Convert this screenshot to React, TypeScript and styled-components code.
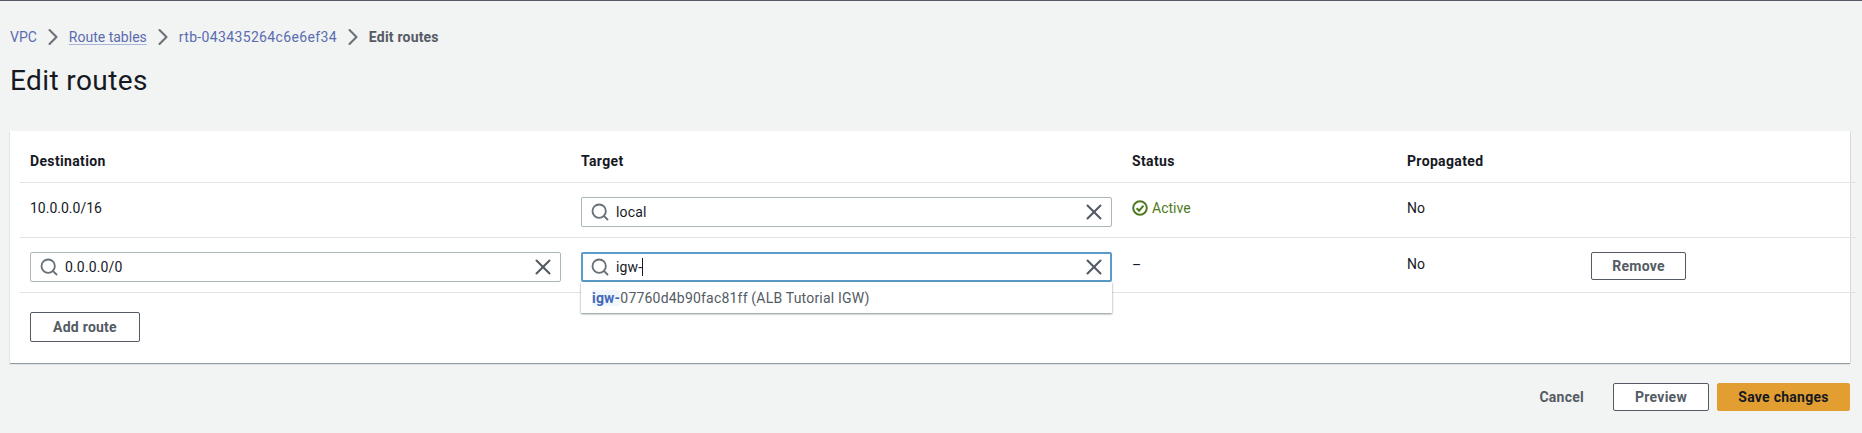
import React from "react";
import styled, {createGlobalStyle} from "styled-components";
import {Search, X, ChevronRight} from "lucide-react";

const GlobalStyle = createGlobalStyle`
  html, body {
    margin: 0;
    padding: 0;
    background: #f2f3f3;
  }

  body {
    font-family: Roboto, "Liberation Sans", sans-serif;
    font-size: 14px;
    color: #16191f;
  }
`

const Page = styled.div`
  width: 1862px;
  height: 433px;
  overflow: hidden;
  box-sizing: border-box;
  border-top: 1px solid #545b64;
  padding: 27px 12px 0 10px;
`

const Breadcrumbs = styled.nav`
  display: flex;
  align-items: center;
  height: 18px;
  color: #545b64;
`

const Crumb = styled.span<{$underline?: boolean; $spacing?: number}>`
  color: #5a6cb0;
  letter-spacing: ${p => p.$spacing ?? 0}px;
  text-decoration: ${p => p.$underline ? "underline" : "none"};
  text-decoration-color: #a9b4dc;
  text-underline-offset: 2px;
`

const CurrentCrumb = styled.span`
  color: #545b64;
  font-weight: 700;
  letter-spacing: 0.2px;
`

const CrumbArrow = styled(ChevronRight)`
  width: 28px;
  height: 28px;
  margin: 0 2px;
  color: #687078;
  stroke-width: 1.8;
`

const Title = styled.h1`
  margin: 17px 0 0;
  font-size: 28px;
  line-height: 36px;
  font-weight: 400;
  letter-spacing: 0.4px;
  color: #16191f;
`

const Card = styled.section`
  margin-top: 32px;
  width: 1840px;
  height: 232px;
  box-sizing: border-box;
  background: #fff;
  padding: 0 0 0 10px;
  box-shadow: 0 1px 1px 0 rgba(0, 28, 36, 0.4), 1px 0 1px -1px rgba(0, 28, 36, 0.3);
  position: relative;
`

const Row = styled.div<{$height: number}>`
  display: grid;
  grid-template-columns: 551px 551px 275px 184px 275px;
  width: 1836px;
  height: ${p => p.$height}px;
  border-bottom: 1px solid #e2e4e4;
  box-sizing: border-box;
`

const HeaderCell = styled.div`
  padding: 20px 10px 0;
  line-height: 20px;
  font-weight: 700;
  letter-spacing: 0.35px;
  color: #16191f;
`

const Cell = styled.div<{$top?: number}>`
  padding: ${p => p.$top ?? 14}px 10px 0;
  line-height: 20px;
  color: #16191f;
`

const Field = styled.div<{$focus?: boolean}>`
  display: flex;
  align-items: center;
  width: 531px;
  height: 30px;
  box-sizing: border-box;
  background: #fff;
  border-radius: 2px;
  border: ${p => p.$focus ? "2px solid #5a9bc9" : "1px solid #aab7b8"};
  padding: 0 ${p => p.$focus ? 3 : 4}px 0 ${p => p.$focus ? 7 : 8}px;
`

const SearchIcon = styled(Search)`
  width: 20px;
  height: 20px;
  color: #687078;
  stroke-width: 2.2;
  flex: none;
`

const ClearIcon = styled(X)`
  width: 26px;
  height: 26px;
  color: #545b64;
  stroke-width: 1.9;
  flex: none;
`

const FieldText = styled.span`
  flex: 1;
  margin-left: 6px;
  line-height: 20px;
  letter-spacing: 0.15px;
  color: #16191f;
`

const Caret = styled.span`
  display: inline-block;
  width: 1px;
  height: 18px;
  vertical-align: -4px;
  background: #16191f;
`

const Anchor = styled.div`
  position: relative;
`

const Dropdown = styled.div`
  position: absolute;
  z-index: 2;
  top: 30px;
  left: 0;
  width: 531px;
  height: 31px;
  box-sizing: border-box;
  background: #fff;
  padding: 6px 11px 0;
  line-height: 20px;
  letter-spacing: 0.2px;
  color: #545b64;
  box-shadow: 0 1px 2px rgba(0, 28, 36, 0.5);
`

const Match = styled.span`
  color: #3f68b8;
  font-weight: 700;
  background: #f1f6fd;
`

const StatusOk = styled.span`
  display: inline-flex;
  align-items: center;
  gap: 4px;
  color: #4f7a21;
`

const Button = styled.button<{$width: number; $height?: number}>`
  display: block;
  width: ${p => p.$width}px;
  height: ${p => p.$height ?? 30}px;
  box-sizing: border-box;
  padding: 0;
  background: #fff;
  border: 1px solid #545b64;
  border-radius: 2px;
  font: 700 14px Roboto, "Liberation Sans", sans-serif;
  letter-spacing: 0.25px;
  color: #545b64;
`

const CardFooter = styled.div`
  padding: 19px 0 0 10px;
`

const Actions = styled.div`
  display: flex;
  justify-content: flex-end;
  align-items: center;
  width: 1840px;
  margin-top: 20px;
`

const CancelLink = styled.span`
  font-weight: 700;
  letter-spacing: 0.25px;
  color: #545b64;
  margin-right: 29px;
`

const PrimaryButton = styled(Button)`
  margin-left: 8px;
  background: #e39e32;
  border-color: #e39e32;
  color: #16191f;
`

function ActiveIcon() {
    return <svg width="16" height="16" viewBox="0 0 16 16" fill="none" stroke="currentColor" strokeWidth="2">
        <circle cx="8" cy="8" r="6.8"/>
        <path d="M4.6 8.2 7.1 10.7 11.5 5.6"/>
    </svg>
}

function SearchField({value, focus, caret}: { value: string, focus?: boolean, caret?: boolean }) {
    return <Field $focus={focus}>
        <SearchIcon/>
        <FieldText>{value}{caret && <Caret/>}</FieldText>
        <ClearIcon/>
    </Field>
}

export default function App() {
    return <Page>
        <GlobalStyle/>
        <Breadcrumbs>
            <Crumb>VPC</Crumb>
            <CrumbArrow/>
            <Crumb $underline>Route tables</Crumb>
            <CrumbArrow/>
            <Crumb $spacing={0.35}>rtb-043435264c6e6ef34</Crumb>
            <CrumbArrow/>
            <CurrentCrumb>Edit routes</CurrentCrumb>
        </Breadcrumbs>
        <Title>Edit routes</Title>
        <Card>
            <Row $height={52}>
                <HeaderCell>Destination</HeaderCell>
                <HeaderCell>Target</HeaderCell>
                <HeaderCell>Status</HeaderCell>
                <HeaderCell>Propagated</HeaderCell>
                <HeaderCell/>
            </Row>
            <Row $height={55}>
                <Cell $top={15}>10.0.0.0/16</Cell>
                <Cell>
                    <SearchField value="local"/>
                </Cell>
                <Cell $top={15}>
                    <StatusOk><ActiveIcon/>Active</StatusOk>
                </Cell>
                <Cell $top={15}>No</Cell>
                <Cell/>
            </Row>
            <Row $height={55}>
                <Cell>
                    <SearchField value="0.0.0.0/0"/>
                </Cell>
                <Cell>
                    <Anchor>
                        <SearchField value="igw-" focus caret/>
                        <Dropdown><Match>igw-</Match>07760d4b90fac81ff (ALB Tutorial IGW)</Dropdown>
                    </Anchor>
                </Cell>
                <Cell $top={17}>–</Cell>
                <Cell $top={16}>No</Cell>
                <Cell><Button $width={95} $height={28}>Remove</Button></Cell>
            </Row>
            <CardFooter>
                <Button $width={110}>Add route</Button>
            </CardFooter>
        </Card>
        <Actions>
            <CancelLink>Cancel</CancelLink>
            <Button $width={96} $height={28}>Preview</Button>
            <PrimaryButton $width={133} $height={28}>Save changes</PrimaryButton>
        </Actions>
    </Page>
}
